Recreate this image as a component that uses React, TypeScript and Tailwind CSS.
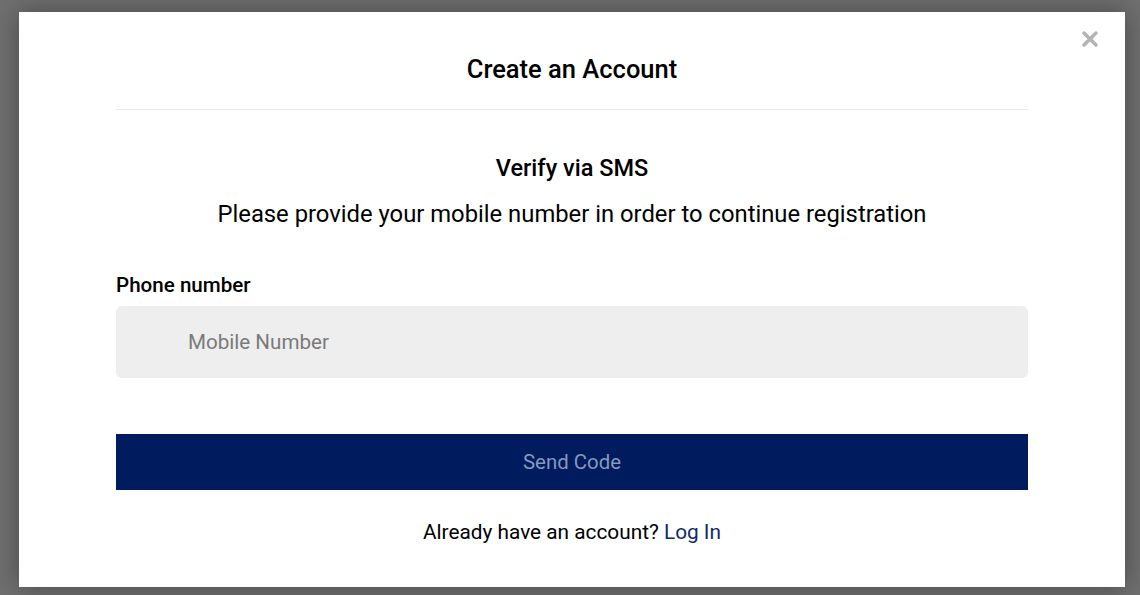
import { X } from "lucide-react";

export default function App() {
  return (
    <div
      className="w-[1140px] h-[595px] bg-[#6f6f6f] flex items-start pl-[19px] pt-[12px]"
      style={{ fontFamily: "Roboto, 'Noto Sans', sans-serif" }}
    >
      <div className="relative w-[1106px] h-[575px] bg-white shadow-[0_0_24px_rgba(0,0,0,0.35)] px-[97px] pt-[39px]">
        <button className="absolute top-[15px] right-[23px] text-[#b3b3b3]">
          <X size={24} strokeWidth={3.5} />
        </button>

        <h2 className="text-center text-[25.5px] font-medium text-black leading-[36px] pb-[22px] border-b border-[#e8e8e8]">
          Create an Account
        </h2>

        <div className="text-center mt-[42px]">
          <h3 className="text-[23.5px] font-medium text-black leading-[32px]">Verify via SMS</h3>
          <p className="text-[23.8px] text-black leading-[32px] mt-[14px]">
            Please provide your mobile number in order to continue registration
          </p>
        </div>

        <label className="block mt-[41px] text-[20.6px] font-medium text-black leading-[28px]">
          Phone number
        </label>
        <input
          type="text"
          placeholder="Mobile Number"
          className="mt-[7px] w-full h-[72px] rounded-[6px] bg-[#eeeeee] pl-[72px] text-[20.6px] text-black placeholder:text-[#7a7a7a] outline-none"
        />

        <button className="mt-[56px] w-full h-[56px] bg-[#001b5e] text-[#8798bd] text-[20.4px]">
          Send Code
        </button>

        <p className="text-center mt-[28px] text-[20.8px] text-black leading-[28px]">
          Already have an account? <a className="text-[#0d2a6b]">Log In</a>
        </p>
      </div>
    </div>
  );
}
